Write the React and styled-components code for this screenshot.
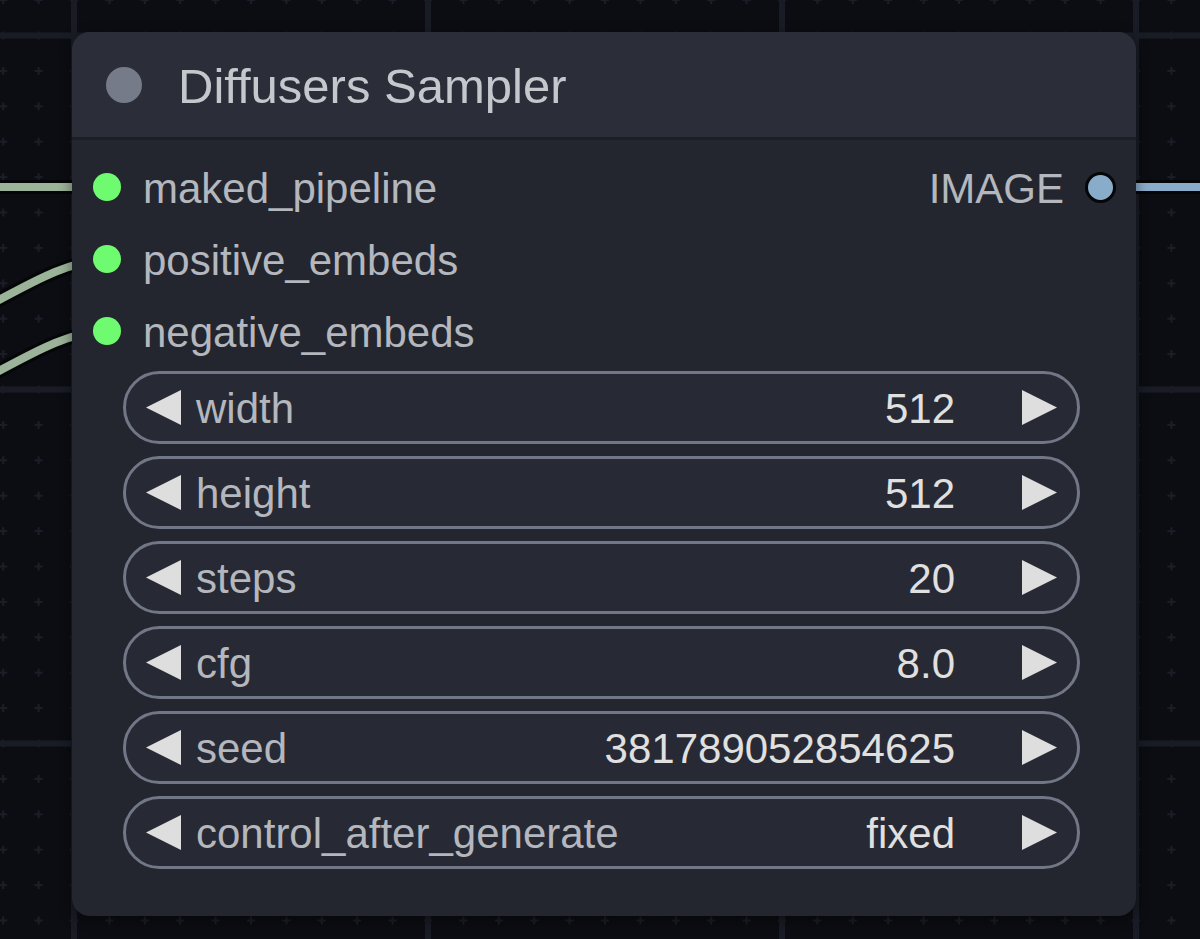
import React from "react";
import styled, { createGlobalStyle } from "styled-components";

const canvasColor = "#0b0d12";
const gridColor = "#191c25";
const crossColor = "#1b1e28";
const titleColor = "#2b2e39";
const bodyColor = "#23262f";
const pillColor = "#272a34";
const pillBorder = "#717786";
const labelColor = "#b4b7bd";
const valueColor = "#e0e0e0";
const font = `"Liberation Sans", Arial, Helvetica, sans-serif`;

const GlobalStyle = createGlobalStyle`
  html, body {
    margin: 0;
    padding: 0;
    background: ${canvasColor};
    overflow: hidden;
  }
`;

const Canvas = styled.div`
  position: relative;
  width: 100vw;
  height: 939px;
  overflow: hidden;
  background: ${canvasColor};
  font-family: ${font};
`;

const Backdrop = styled.svg`
  position: absolute;
  inset: 0;
  width: 100%;
  height: 100%;
`;

const Node = styled.div`
  position: absolute;
  left: 72px;
  top: 32px;
  width: 1064px;
  height: 884px;
  border-radius: 18px;
  background: ${bodyColor};
  box-shadow: 0 4px 14px rgba(0, 0, 0, 0.45);
  overflow: hidden;
  display: flex;
  flex-direction: column;
`;

const Header = styled.div`
  height: 105px;
  flex-shrink: 0;
  display: flex;
  align-items: center;
  gap: 36px;
  padding-left: 34px;
  background: ${titleColor};
  border-bottom: 3px solid #1c1e26;
`;

const TitleDot = styled.span`
  width: 36px;
  height: 36px;
  border-radius: 50%;
  background: #767b89;
`;

const Title = styled.span`
  font-size: 49px;
  color: #c4c7cc;
  line-height: 1;
  margin-top: 3px;
`;

const Body = styled.div`
  padding-top: 11px;
  display: flex;
  flex-direction: column;
`;

const SlotRow = styled.div`
  height: 72px;
  display: flex;
  align-items: center;
  justify-content: space-between;
  padding: 0 20px 0 21px;
`;

const Slot = styled.div`
  display: flex;
  align-items: center;
  gap: ${(p) => (p.$out ? "21px" : "22px")};
`;

const SlotDot = styled.span`
  width: ${(p) => (p.$out ? "25px" : "28px")};
  height: ${(p) => (p.$out ? "25px" : "28px")};
  border-radius: 50%;
  background: ${(p) => p.$color};
  border: ${(p) => (p.$out ? "3px solid #050608" : "none")};
`;

const SlotLabel = styled.span`
  font-size: 42px;
  line-height: 1;
  color: ${labelColor};
  margin-top: 4px;
`;

const WidgetList = styled.div`
  display: flex;
  flex-direction: column;
  gap: 12px;
  margin: 4px 56px 0 51px;
`;

const Pill = styled.div`
  height: 73px;
  box-sizing: border-box;
  border: 3px solid ${pillBorder};
  border-radius: 37px;
  background: ${pillColor};
  display: flex;
  align-items: center;
  padding: 0 20px;
`;

const Arrow = styled.svg`
  width: 35px;
  height: 35px;
  flex-shrink: 0;
  fill: #dedede;
`;

const WidgetLabel = styled.span`
  font-size: 42px;
  line-height: 1;
  color: ${labelColor};
  margin: 2px 0 0 15px;
`;

const WidgetValue = styled.span`
  flex: 1;
  text-align: right;
  font-size: 42px;
  line-height: 1;
  color: ${valueColor};
  margin: 2px 67px 0 0;
`;

const inputs = [
  { name: "maked_pipeline", out: "IMAGE" },
  { name: "positive_embeds" },
  { name: "negative_embeds" },
];

const widgets = [
  ["width", "512"],
  ["height", "512"],
  ["steps", "20"],
  ["cfg", "8.0"],
  ["seed", "381789052854625"],
  ["control_after_generate", "fixed"],
];

const Wire = ({ d, color }) => (
  <g fill="none" strokeLinecap="round">
    <path d={d} stroke="#050608" strokeWidth="14" />
    <path d={d} stroke={color} strokeWidth="8" />
  </g>
);

const Grid = () => (
  <Backdrop>
    <defs>
      <pattern id="crosses" patternUnits="userSpaceOnUse" x="56.3" y="17.8" width="35.4" height="35.4">
        <path d="M13.7 17.7h8M17.7 13.7v8" stroke={crossColor} strokeWidth="2" />
      </pattern>
      <pattern id="lines" patternUnits="userSpaceOnUse" x="-103" y="-141.5" width="354" height="354">
        <rect x="174" y="0" width="6" height="354" fill={gridColor} />
        <rect x="0" y="174" width="354" height="6" fill={gridColor} />
      </pattern>
    </defs>
    <rect width="100%" height="100%" fill="url(#crosses)" />
    <rect width="100%" height="100%" fill="url(#lines)" />
    <Wire d="M-20 187 H106" color="#9bb398" />
    <Wire d="M-100 350 C10 300, 50 262, 106 260" color="#9bb398" />
    <Wire d="M-100 421 C10 371, 50 333, 106 331" color="#9bb398" />
    <Wire d="M1100 187 H1220" color="#8aaccb" />
  </Backdrop>
);

export default function App() {
  return (
    <Canvas>
      <GlobalStyle />
      <Grid />
      <Node>
        <Header>
          <TitleDot />
          <Title>Diffusers Sampler</Title>
        </Header>
        <Body>
          {inputs.map((slot) => (
            <SlotRow key={slot.name}>
              <Slot>
                <SlotDot $color="#6ffb6f" />
                <SlotLabel>{slot.name}</SlotLabel>
              </Slot>
              {slot.out && (
                <Slot $out>
                  <SlotLabel>{slot.out}</SlotLabel>
                  <SlotDot $out $color="#8aaccb" />
                </Slot>
              )}
            </SlotRow>
          ))}
          <WidgetList>
            {widgets.map(([label, value]) => (
              <Pill key={label}>
                <Arrow viewBox="0 0 35 35">
                  <polygon points="35,0 35,35 0,17.5" />
                </Arrow>
                <WidgetLabel>{label}</WidgetLabel>
                <WidgetValue>{value}</WidgetValue>
                <Arrow viewBox="0 0 35 35">
                  <polygon points="0,0 35,17.5 0,35" />
                </Arrow>
              </Pill>
            ))}
          </WidgetList>
        </Body>
      </Node>
    </Canvas>
  );
}
